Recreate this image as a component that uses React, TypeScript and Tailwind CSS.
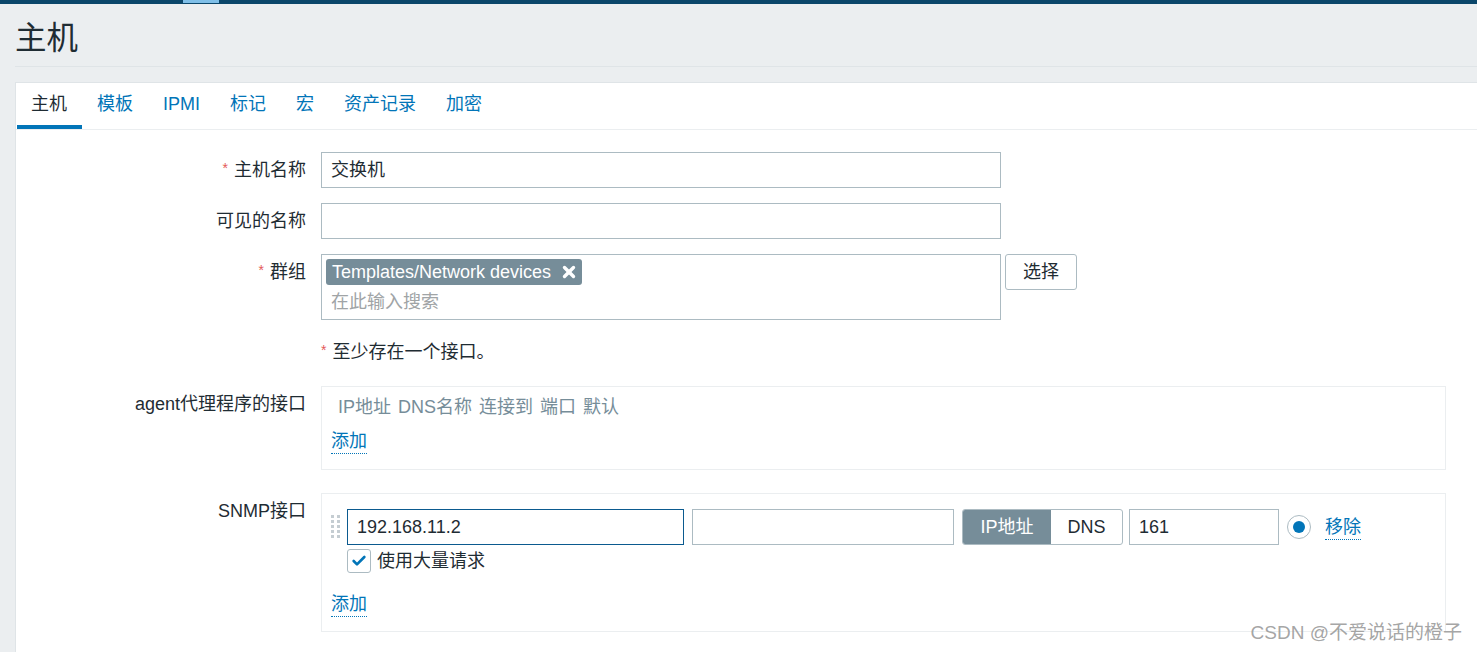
import { Check, X } from "lucide-react";

const font = "font-['Liberation_Sans','Noto_Sans_CJK_SC',sans-serif]";

const tabs = ["主机", "模板", "IPMI", "标记", "宏", "资产记录", "加密"];

function Req() {
  return <span className="text-[#e45959] text-[14px] mr-[6px] relative -top-[3px]">*</span>;
}

function Label({ children, req }: { children: React.ReactNode; req?: boolean }) {
  return (
    <div className="pr-[15px] text-right h-[36px] leading-[36px] text-[18px] text-[#1f2c33] whitespace-nowrap">
      {req && <Req />}
      {children}
    </div>
  );
}

function DragHandle() {
  return (
    <svg width="9" height="25" viewBox="0 0 9 25" className="shrink-0">
      {[0, 5, 10, 15, 20].map((y) =>
        [0, 6].map((x) => <rect key={`${x}-${y}`} x={x} y={y} width="3" height="3" fill="#c5cdd2" />)
      )}
    </svg>
  );
}

export default function App() {
  return (
    <div className={`${font} min-h-screen bg-[#ebeef0] relative overflow-hidden`}>
      {/* top bar */}
      <div className="h-[4px] bg-[#0a466a] relative">
        <div className="absolute left-[183px] top-0 w-[36px] h-[3px] bg-[#7fbfe8]" />
      </div>

      {/* header */}
      <div className="pl-[15px]">
        <div className="pt-[16px] pb-[10px] border-b border-[#dfe4e7]">
          <h1 className="text-[31.5px] leading-[36px] text-[#1f2c33]">主机</h1>
        </div>
      </div>

      {/* container */}
      <div className="ml-[15px] mt-[15px] bg-white border border-r-0 border-[#dfe4e7]">
        <div className="flex border-b border-[#ebeef0]">
          {tabs.map((t, i) => (
            <div
              key={t}
              className={`px-[15px] h-[46px] leading-[42px] text-[18px] border-b-4 ${
                i === 0 ? "border-[#0275b8] text-[#1f2c33] ml-[1px] pl-[14px]" : "border-transparent text-[#0275b8]"
              }`}
            >
              {t}
            </div>
          ))}
        </div>

        <div className="pt-[22px] pb-[40px] grid grid-cols-[305px_1fr]">
          {/* host name */}
          <Label req>主机名称</Label>
          <div className="mb-[15px]">
            <div className="w-[680px] h-[36px] border border-[#acbbc2] px-[9px] leading-[34px] text-[18px] text-[#1f2c33]">
              交换机
            </div>
          </div>

          {/* visible name */}
          <Label>可见的名称</Label>
          <div className="mb-[15px]">
            <div className="w-[680px] h-[36px] border border-[#acbbc2]" />
          </div>

          {/* groups */}
          <Label req>群组</Label>
          <div className="mb-[14px] flex gap-[4px] items-start">
            <div className="w-[680px] h-[66px] border border-[#acbbc2] pt-[4px] pl-[4px]">
              <span className="inline-flex items-center h-[26px] rounded-[3px] bg-[#768d99] text-white text-[18px] pl-[6px] pr-[4px]">
                Templates/Network devices
                <X className="w-[18px] h-[18px] ml-[9px]" strokeWidth={4.5} />
              </span>
              <div className="pl-[5px] pt-[2px] h-[30px] leading-[30px] text-[18px] text-[#a0a4a6]">在此输入搜索</div>
            </div>
            <button className="w-[72px] h-[36px] border border-[#acbbc2] rounded-[3px] bg-white text-[18px] text-[#1f2c33]">
              选择
            </button>
          </div>

          {/* error */}
          <div />
          <div className="mb-[16px] h-[36px] leading-[36px] text-[18px] text-[#1f2c33]">
            <Req />
            至少存在一个接口。
          </div>

          {/* agent */}
          <Label>agent代理程序的接口</Label>
          <div className="mb-[23px]">
            <div className="w-[1125px] border border-[#ebeef0] pt-[5px] pb-[12px] pl-[9px]">
              <div className="h-[30px] leading-[30px] flex gap-[7px] pl-[7px] text-[18px] text-[#768d99]">
                <span>IP地址</span>
                <span>DNS名称</span>
                <span>连接到</span>
                <span>端口</span>
                <span>默认</span>
              </div>
              <div className="mt-[5px] h-[30px] leading-[30px]">
                <span className="text-[18px] text-[#0275b8] border-b border-dotted border-[#0275b8] leading-[24px] inline-block">
                  添加
                </span>
              </div>
            </div>
          </div>

          {/* snmp */}
          <Label>SNMP接口</Label>
          <div>
            <div className="w-[1125px] border border-[#ebeef0] pt-[15px] pb-[11px] pl-[9px]">
              <div className="flex items-center h-[36px]">
                <DragHandle />
                <div className="ml-[7px] w-[337px] h-[36px] border border-[#0b5a8f] px-[9px] leading-[34px] text-[18px] text-[#1f2c33]">
                  192.168.11.2
                </div>
                <div className="ml-[8px] w-[262px] h-[36px] border border-[#acbbc2]" />
                <div className="ml-[8px] flex h-[36px] w-[161px] border border-[#acbbc2] rounded-[3px] overflow-hidden text-[18px]">
                  <div className="w-[88px] bg-[#768d99] text-white flex items-center justify-center">IP地址</div>
                  <div className="flex-1 text-[#1f2c33] flex items-center justify-center">DNS</div>
                </div>
                <div className="ml-[6px] w-[150px] h-[36px] border border-[#acbbc2] px-[9px] leading-[34px] text-[18px] text-[#1f2c33]">
                  161
                </div>
                <div className="ml-[8px] w-[24px] h-[24px] rounded-full border border-[#acbbc2] flex items-center justify-center">
                  <div className="w-[12px] h-[12px] rounded-full bg-[#0275b8]" />
                </div>
                <span className="ml-[14px] text-[18px] text-[#0275b8] border-b border-dotted border-[#0275b8] leading-[24px]">
                  移除
                </span>
              </div>
              <div className="mt-[4px] ml-[16px] flex items-center h-[24px]">
                <div className="w-[24px] h-[24px] rounded-[3px] border border-[#acbbc2] flex items-center justify-center">
                  <Check className="w-[16px] h-[16px] text-[#0275b8]" strokeWidth={4} />
                </div>
                <span className="ml-[6px] text-[18px] text-[#1f2c33]">使用大量请求</span>
              </div>
              <div className="mt-[17px] h-[30px] leading-[30px]">
                <span className="text-[18px] text-[#0275b8] border-b border-dotted border-[#0275b8] leading-[24px] inline-block">
                  添加
                </span>
              </div>
            </div>
          </div>
        </div>
      </div>

      {/* watermark */}
      <div className="absolute right-[15px] top-[620px] text-[19px] text-[#9a9a9a]/90 leading-[26px]">
        CSDN @不爱说话的橙子
      </div>
    </div>
  );
}
